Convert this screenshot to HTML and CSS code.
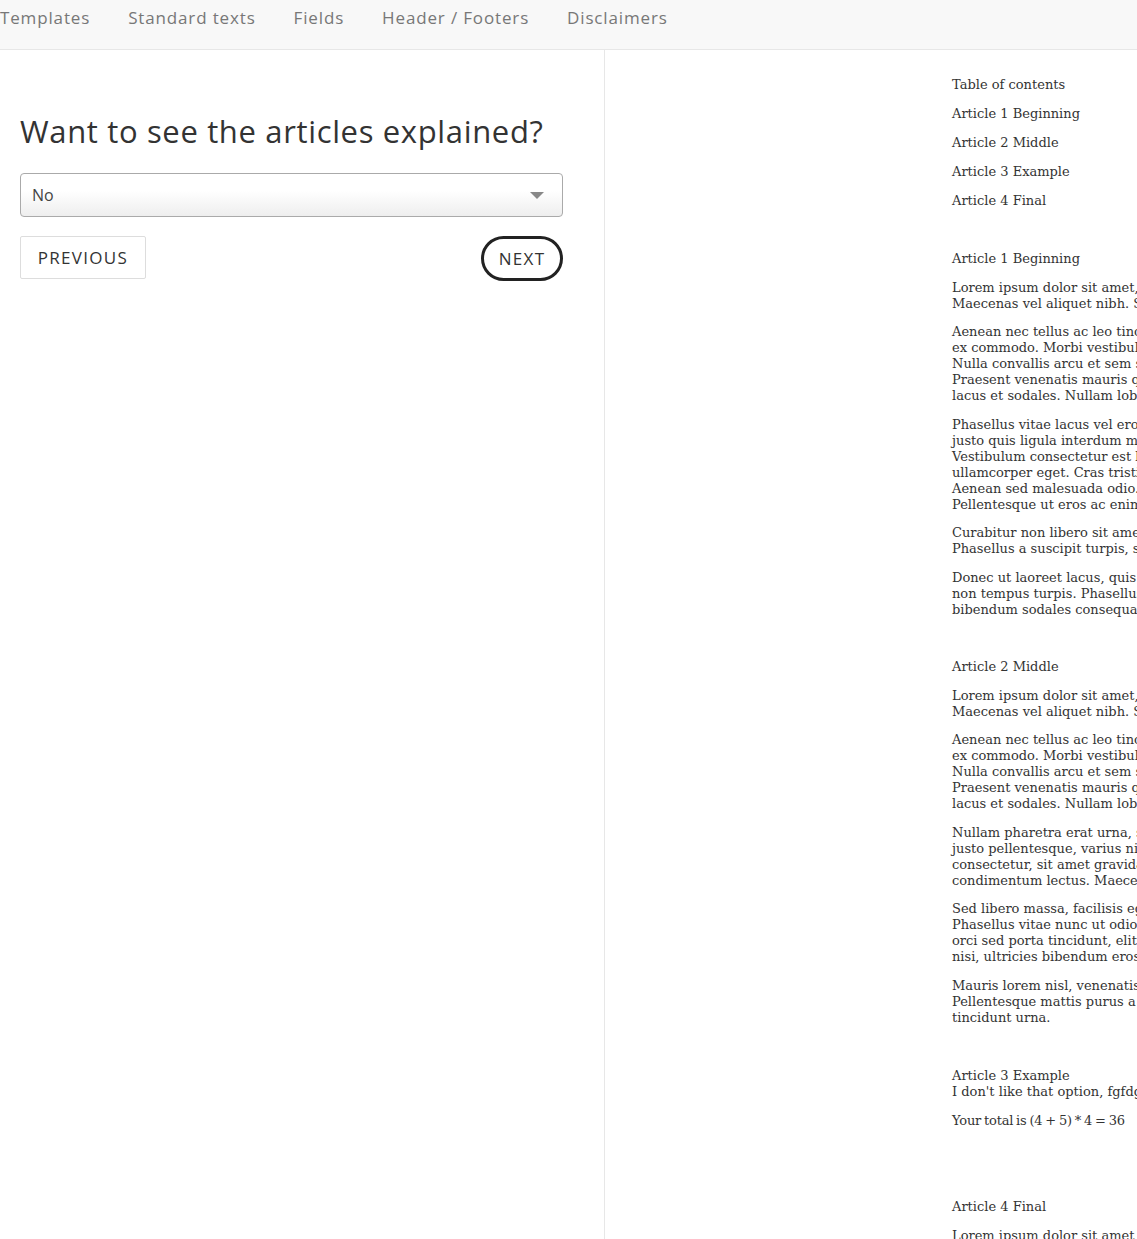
FILE: index.html
```html
<!DOCTYPE html>
<html lang="en">
<head>
<meta charset="utf-8">
<title>Articles</title>
<link rel="stylesheet" href="styles.css">
</head>
<body>
<nav class="topnav">
  <ul class="nav-list">
    <li class="nav-item">Templates</li>
    <li class="nav-item">Standard texts</li>
    <li class="nav-item">Fields</li>
    <li class="nav-item">Header / Footers</li>
    <li class="nav-item">Disclaimers</li>
  </ul>
</nav>
<main class="layout">
  <section class="wizard">
    <h1 class="question">Want to see the articles explained?</h1>
    <div class="select-box">
      <span class="select-value">No</span>
      <span class="select-caret"></span>
    </div>
    <div class="buttons">
      <button class="btn btn-prev">PREVIOUS</button>
      <button class="btn btn-next">NEXT</button>
    </div>
  </section>
  <section class="preview">
    <div class="doc">
      <div class="toc">
        <div class="toc-item">Table of contents</div>
        <div class="toc-item">Article 1 Beginning</div>
        <div class="toc-item">Article 2 Middle</div>
        <div class="toc-item">Article 3 Example</div>
        <div class="toc-item">Article 4 Final</div>
      </div>

      <div class="article">
        <div class="article-title">Article 1 Beginning</div>
        <p>Lorem ipsum dolor sit amet, consectetur adipiscing elit.<br>Maecenas vel aliquet nibh. Sed eget dapibus lorem.</p>
        <p>Aenean nec tellus ac leo tincidunt tempus quis at<br>ex commodo. Morbi vestibulum dui eu tortor mattis.<br>Nulla convallis arcu et sem sollicitudin, ut feugiat.<br>Praesent venenatis mauris quis odio consequat,<br>lacus et sodales. Nullam lobortis nibh vel mauris.</p>
        <p>Phasellus vitae lacus vel eros hendrerit tincidunt<br>justo quis ligula interdum mattis. Integer et urna<br>Vestibulum consectetur est leo, ac egestas augue<br>ullamcorper eget. Cras tristique rhoncus mauris.<br>Aenean sed malesuada odio. Etiam at purus nisl.<br>Pellentesque ut eros ac enim tristique aliquam.</p>
        <p>Curabitur non libero sit amet nibh ultrices varius.<br>Phasellus a suscipit turpis, sed faucibus nisi.</p>
        <p>Donec ut laoreet lacus, quis fringilla velit. Nunc<br>non tempus turpis. Phasellus porttitor ante vel<br>bibendum sodales consequat. Mauris eget erat.</p>
      </div>

      <div class="article">
        <div class="article-title">Article 2 Middle</div>
        <p>Lorem ipsum dolor sit amet, consectetur adipiscing elit.<br>Maecenas vel aliquet nibh. Sed eget dapibus lorem.</p>
        <p>Aenean nec tellus ac leo tincidunt tempus quis at<br>ex commodo. Morbi vestibulum dui eu tortor mattis.<br>Nulla convallis arcu et sem sollicitudin, ut feugiat.<br>Praesent venenatis mauris quis odio consequat,<br>lacus et sodales. Nullam lobortis nibh vel mauris.</p>
        <p>Nullam pharetra erat urna, sit amet posuere<br>justo pellentesque, varius nisi. Donec lorem leo,<br>consectetur, sit amet gravida vel, tempor vitae<br>condimentum lectus. Maecenas at fermentum ex.</p>
        <p>Sed libero massa, facilisis eget lectus vel, semper<br>Phasellus vitae nunc ut odio dapibus fermentum.<br>orci sed porta tincidunt, elit metus cursus magna<br>nisi, ultricies bibendum eros nunc at tortor.</p>
        <p>Mauris lorem nisl, venenatis quis semper eget,<br>Pellentesque mattis purus a velit lobortis, vitae<br>tincidunt urna.</p>
      </div>

      <div class="article article-example">
        <div class="article-title article-title-tight">Article 3 Example</div>
        <p>I don't like that option, fgfdg</p>
        <p class="total">Your total is (4 + 5) * 4 = 36</p>
      </div>

      <div class="article article-spaced">
        <div class="article-title">Article 4 Final</div>
        <p>Lorem ipsum dolor sit amet, consectetur adipiscing elit.<br>Maecenas vel aliquet nibh. Sed eget dapibus lorem.</p>
      </div>
    </div>
  </section>
</main>
</body>
</html>
```

FILE: styles.css
```css
html, body {
  margin: 0;
  padding: 0;
  background: #fff;
  height: 1239px;
  overflow: hidden;
}

body {
  font-family: "Open Sans", "DejaVu Sans", sans-serif;
  color: #333;
}

.topnav {
  height: 49px;
  background: #f8f8f8;
  border-bottom: 1px solid #e7e7e7;
  box-sizing: content-box;
}

.nav-list {
  list-style: none;
  margin: 0;
  padding: 7px 0 0 0;
  display: flex;
  gap: 38px;
}

.nav-item {
  font-size: 17px;
  line-height: 22px;
  letter-spacing: 0.85px;
  color: #777;
  white-space: nowrap;
}

.layout {
  display: flex;
  height: 1189px;
}

.wizard {
  width: 605px;
  flex: none;
  box-sizing: border-box;
  border-right: 1px solid #e7e7e7;
  padding: 0 41px 0 20px;
}

.question {
  margin: 62px 0 23px 0;
  font-size: 31px;
  line-height: 38px;
  letter-spacing: 0.65px;
  font-weight: 400;
  color: #333;
  white-space: nowrap;
}

.select-box {
  height: 44px;
  box-sizing: border-box;
  border: 1px solid #aaa;
  border-radius: 4px;
  background: linear-gradient(#ffffff 40%, #eeeeee 100%);
  display: flex;
  align-items: center;
  justify-content: space-between;
  padding: 0 18px 0 11px;
}

.select-value {
  font-size: 16px;
  color: #444;
}

.select-caret {
  width: 0;
  height: 0;
  border-left: 7px solid transparent;
  border-right: 7px solid transparent;
  border-top: 7px solid #888;
}

.buttons {
  margin-top: 19px;
  display: flex;
  justify-content: space-between;
  align-items: flex-start;
}

.btn {
  font-family: inherit;
  font-size: 17px;
  letter-spacing: 1.3px;
  color: #333;
  background: #fff;
  cursor: pointer;
}

.btn-prev {
  width: 126px;
  height: 43px;
  border: 1px solid #ddd;
  border-radius: 2px;
  padding: 0;
}

.btn-next {
  width: 82px;
  height: 45px;
  border: 3px solid #222;
  border-radius: 23px;
  padding: 0;
}

.preview {
  flex: 1;
  overflow: hidden;
  min-width: 0;
}

.doc {
  padding: 27px 0 0 347px;
  font-family: "DejaVu Serif", "Liberation Serif", serif;
  font-size: 13px;
  line-height: 16px;
  color: #333;
  white-space: nowrap;
}

.toc-item {
  margin-bottom: 13px;
}

.toc-item:last-child {
  margin-bottom: 0;
}

.article {
  margin-top: 42px;
}

.article-title {
  margin-bottom: 12.5px;
}

.article-title-tight {
  margin-bottom: 0;
}

.article p {
  margin: 0 0 12.5px 0;
}

.article p:last-child {
  margin-bottom: 0;
}

.article .total {
  letter-spacing: -0.2px;
  word-spacing: -1px;
}

.article + .article {
  margin-top: 41.5px;
}

.article + .article-example {
  margin-top: 42.5px;
}

.article + .article-spaced {
  margin-top: 70.5px;
}
```
